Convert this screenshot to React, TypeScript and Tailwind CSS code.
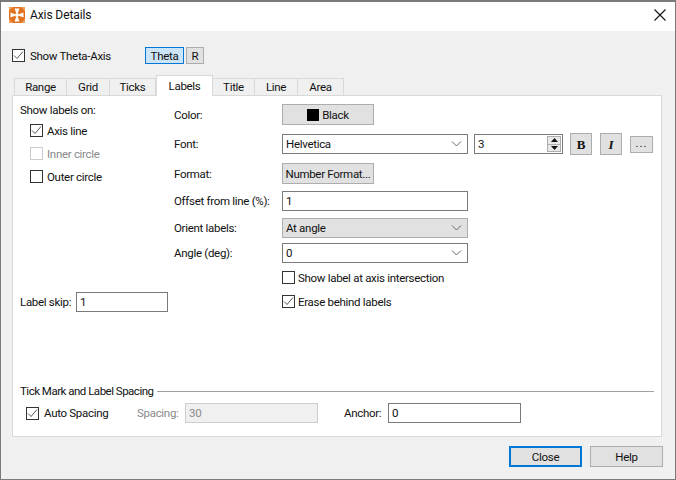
import { ReactNode } from 'react';

function Check({ checked = false, disabled = false }: { checked?: boolean; disabled?: boolean }) {
  return (
    <span className={`flex h-[13px] w-[13px] shrink-0 items-center justify-center border bg-white ${disabled ? 'border-[#cccccc]' : 'border-[#333333]'}`}>
      {checked && (
        <svg width="11" height="11" viewBox="0 0 11 11" fill="none">
          <path d="M1 5.5 L4 8.5 L10 1.5" stroke="#555555" strokeWidth="1" />
        </svg>
      )}
    </span>
  );
}

function CheckLabel({ text, checked, disabled, gap = 'gap-[4px]' }: { text: string; checked?: boolean; disabled?: boolean; gap?: string }) {
  return (
    <div className={`flex h-[13px] items-center ${gap}`}>
      <Check checked={checked} disabled={disabled} />
      <span className={`whitespace-nowrap pt-[2px] ${disabled ? 'text-[#8a8a8a]' : ''}`}>{text}</span>
    </div>
  );
}

function Chevron() {
  return (
    <svg width="11" height="6" viewBox="0 0 11 6" fill="none" className="shrink-0">
      <path d="M1 0.5 L5.5 5 L10 0.5" stroke="#666666" strokeWidth="1" />
    </svg>
  );
}

function Field({ value, className = '' }: { value: string; className?: string }) {
  return <div className={`flex h-[20px] items-center border border-[#7a7a7a] bg-white pt-[2px] pl-[3px] ${className}`}>{value}</div>;
}

function Combo({ value, gray = false, className = '' }: { value: string; gray?: boolean; className?: string }) {
  return (
    <div className={`flex h-[20px] w-[186px] items-center justify-between border pr-[5px] pl-[3px] ${gray ? 'border-[#adadad] bg-[#e1e1e1]' : 'border-[#7a7a7a] bg-white'} ${className}`}>
      <span className="pt-[2px]">{value}</span>
      <Chevron />
    </div>
  );
}

function Btn({ children, className = '' }: { children: ReactNode; className?: string }) {
  return <div className={`flex items-center justify-center border border-[#adadad] bg-[#e1e1e1] ${className}`}>{children}</div>;
}

function Row({ label, className = '', children }: { label: string; className?: string; children: ReactNode }) {
  return (
    <div className={`flex items-center ${className}`}>
      <span className="w-[108px] whitespace-nowrap pt-[2px]">{label}</span>
      {children}
    </div>
  );
}

const tabs = ['Range', 'Grid', 'Ticks', 'Labels', 'Title', 'Line', 'Area'];
const tabWidths = ['w-[53px]', 'w-[43px]', 'w-[46px]', 'w-[57px]', 'w-[42px]', 'w-[43px]', 'w-[46px]'];

export default function App() {
  return (
    <div className="flex h-[480px] w-[676px] flex-col border border-t-2 border-[#7a7a7a] bg-[#f0f0f0] text-[11.5px] leading-none tracking-[-0.3px] text-[#111111] font-['Roboto',sans-serif]">
      {/* title bar */}
      <div className="flex h-[29px] shrink-0 items-center justify-between bg-white pr-[9px] pb-[3px] pl-[8px]">
        <div className="flex items-center gap-[5px]">
          <svg width="16" height="16" viewBox="0 0 16 16">
            <rect width="16" height="16" fill="#e2711d" />
            <path d="M0 0 L4 0 L0 4 Z M16 0 L12 0 L16 4 Z M0 16 L4 16 L0 12 Z M16 16 L12 16 L16 12 Z" fill="#f0a25c" />
            <circle cx="8" cy="8" r="2" fill="#fff" />
            <path d="M5.5 1.5 L10.5 1.5 L8.8 6 L7.2 6 Z" fill="#fff" />
            <path d="M5.5 14.5 L10.5 14.5 L8.8 10 L7.2 10 Z" fill="#fff" />
            <path d="M1.5 5.5 L1.5 10.5 L6 8.8 L6 7.2 Z" fill="#fff" />
            <path d="M14.5 5.5 L14.5 10.5 L10 8.8 L10 7.2 Z" fill="#fff" />
          </svg>
          <span className="text-[12px] tracking-[-0.1px]">Axis Details</span>
        </div>
        <svg width="12" height="12" viewBox="0 0 12 12" fill="none">
          <path d="M0.5 0.5 L11.5 11.5 M11.5 0.5 L0.5 11.5" stroke="#111111" strokeWidth="1.1" />
        </svg>
      </div>

      {/* axis switch */}
      <div className="mt-[16px] ml-[11px] flex h-[17px] shrink-0 items-center">
        <div className="w-[132px]"><CheckLabel text="Show Theta-Axis" checked gap="gap-[5px]" /></div>
        <Btn className="ml-[1px] h-[17px] w-[39px] !border-[#0078d7] !bg-[#cce4f7] pt-[2px]">Theta</Btn>
        <Btn className="ml-[2px] h-[17px] w-[18px] pt-[2px]">R</Btn>
      </div>

      {/* tabs */}
      <div className="z-10 mt-[11px] -mb-px flex h-[21px] shrink-0 items-end pl-[13px]">
        {tabs.map((t, i) =>
          t === 'Labels' ? (
            <div key={t} className={`flex h-[21px] items-center justify-center border border-b-0 border-[#d9d9d9] bg-white pt-[1px] ${tabWidths[i]}`}>{t}</div>
          ) : (
            <div key={t} className={`flex h-[18px] items-center justify-center border border-l-0 border-[#d9d9d9] bg-[#f0f0f0] pt-[2px] first:border-l ${tabWidths[i]}`}>{t}</div>
          )
        )}
      </div>

      {/* panel */}
      <div className="mx-[11px] flex h-[342px] w-[650px] shrink-0 flex-col justify-between border border-[#d9d9d9] bg-white">
        <div className="flex">
          <div className="flex w-[161px] shrink-0 flex-col pl-[7px]">
            <div className="mt-[6px] flex h-[16px] items-center pt-[2px]">Show labels on:</div>
            <div className="mt-[6px] ml-[10px]"><CheckLabel text="Axis line" checked /></div>
            <div className="mt-[10px] ml-[10px]"><CheckLabel text="Inner circle" disabled /></div>
            <div className="mt-[10px] ml-[10px]"><CheckLabel text="Outer circle" /></div>
            <div className="mt-[109px] flex items-center">
              <span className="w-[56px] whitespace-nowrap pt-[2px]">Label skip:</span>
              <Field value="1" className="w-[92px]" />
            </div>
          </div>
          <div className="flex flex-col">
            <Row label="Color:" className="mt-[8px] h-[21px]">
              <Btn className="h-[21px] w-[92px] gap-[3px]">
                <span className="h-[12px] w-[12px] bg-black" />
                <span className="pt-[2px]">Black</span>
              </Btn>
            </Row>
            <Row label="Font:" className="mt-[8px] h-[22px]">
              <Combo value="Helvetica" />
              <div className="ml-[6px] flex h-[20px] w-[89px] items-center justify-between border border-[#7a7a7a] bg-white pr-[1px] pl-[3px]">
                <span className="pt-[2px]">3</span>
                <div className="flex h-[16px] w-[14px] flex-col border border-[#adadad]">
                  <div className="flex flex-1 items-center justify-center border-b border-[#adadad] bg-[#e9e9e9]">
                    <svg width="7" height="4" viewBox="0 0 7 4"><path d="M3.5 0 L7 4 L0 4 Z" fill="#111" /></svg>
                  </div>
                  <div className="flex flex-1 items-center justify-center bg-[#e9e9e9]">
                    <svg width="7" height="4" viewBox="0 0 7 4"><path d="M0 0 L7 0 L3.5 4 Z" fill="#111" /></svg>
                  </div>
                </div>
              </div>
              <Btn className="ml-[7px] h-[22px] w-[22px] font-['Liberation_Serif',serif] text-[13px] font-bold">B</Btn>
              <Btn className="ml-[8px] h-[22px] w-[22px] font-['Liberation_Serif',serif] text-[13px] font-bold italic">I</Btn>
              <Btn className="ml-[8px] h-[17px] w-[23px] tracking-[1px]">...</Btn>
            </Row>
            <Row label="Format:" className="mt-[8px] h-[21px]">
              <Btn className="h-[21px] w-[92px] whitespace-nowrap pt-[2px]">Number Format...</Btn>
            </Row>
            <Row label="Offset from line (%):" className="mt-[7px] h-[20px]">
              <Field value="1" className="w-[186px]" />
            </Row>
            <Row label="Orient labels:" className="mt-[7px] h-[20px]">
              <Combo value="At angle" gray />
            </Row>
            <Row label="Angle (deg):" className="mt-[5px] h-[20px]">
              <Combo value="0" />
            </Row>
            <div className="mt-[8px] ml-[108px]"><CheckLabel text="Show label at axis intersection" gap="gap-[3px]" /></div>
            <div className="mt-[11px] ml-[108px]"><CheckLabel text="Erase behind labels" checked gap="gap-[3px]" /></div>
          </div>
        </div>

        {/* spacing group */}
        <div className="flex flex-col pr-[7px] pb-[13px] pl-[7px]">
          <div className="flex h-[16px] items-center gap-[3px]">
            <span className="whitespace-nowrap pt-[2px] tracking-[-0.5px]">Tick Mark and Label Spacing</span>
            <div className="h-px flex-1 bg-[#a0a0a0]" />
          </div>
          <div className="mt-[4px] flex h-[20px] items-center pl-[6px]">
            <div className="w-[111px]"><CheckLabel text="Auto Spacing" checked gap="gap-[5px]" /></div>
            <span className="w-[48px] pt-[2px] text-[#8a8a8a]">Spacing:</span>
            <div className="flex h-[20px] w-[133px] items-center border border-[#cccccc] bg-[#f0f0f0] pt-[2px] pl-[3px] text-[#8a8a8a]">30</div>
            <span className="ml-[26px] w-[44px] pt-[2px]">Anchor:</span>
            <Field value="0" className="w-[133px]" />
          </div>
        </div>
      </div>

      {/* footer */}
      <div className="mt-[9px] mr-[12px] flex justify-end gap-[8px]">
        <Btn className="h-[21px] w-[73px] !border-2 !border-[#0078d7] pt-[2px]">Close</Btn>
        <Btn className="h-[21px] w-[73px] pt-[2px]">Help</Btn>
      </div>
    </div>
  );
}
